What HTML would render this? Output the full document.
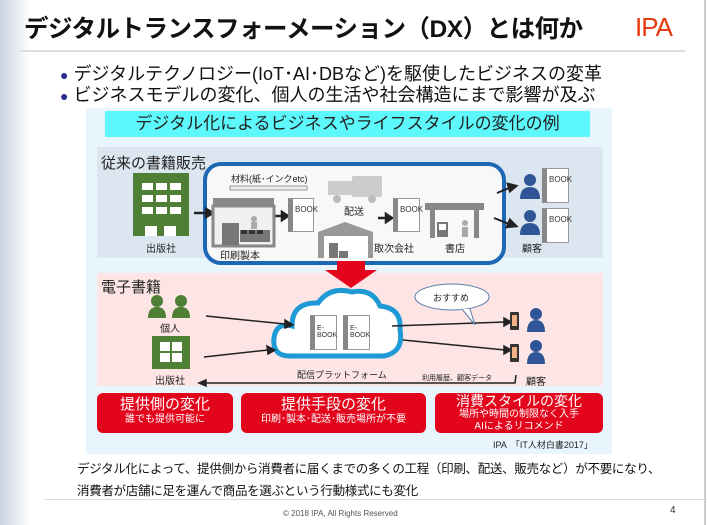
<!DOCTYPE html>
<html><head><meta charset="utf-8"><style>
*{margin:0;padding:0;box-sizing:border-box}
body{width:707px;height:525px;position:relative;overflow:hidden;background:#fff;font-family:"Liberation Sans","Noto Sans CJK JP",sans-serif;color:#111}
.a{position:absolute;white-space:nowrap}
.book{position:absolute;background:#fff;border:1px solid #999;border-left:5px solid #888;font-size:8px;color:#333;padding:6px 0 0 2px}
.p{position:absolute}
.lbl{position:absolute;font-size:10px;color:#222;white-space:nowrap}
.rb{position:absolute;background:#e3051b;border-radius:6px;color:#fff;text-align:center;top:393px;height:40px}
.rb b{display:block;font-size:15px;font-weight:normal;line-height:18px;margin-top:3px}
.rb span{display:block;font-size:10px;line-height:12px}
</style></head><body>
<div class="a" style="left:0;top:0;width:30px;height:525px;background:linear-gradient(90deg,#c9d3e3,#fff)"></div>
<div class="a" style="left:704px;top:0;width:2px;height:525px;background:#ccc"></div>
<div class="a" style="left:24px;top:10px;font-size:24.5px;font-weight:bold;letter-spacing:-0.5px">デジタルトランスフォーメーション（DX）とは何か</div>
<div class="a" style="left:635px;top:12px;font-size:26px;color:#e8380d;letter-spacing:-1px">IPA</div>
<div class="a" style="left:20px;top:50px;width:665px;height:2px;background:#ddd"></div>
<div class="a" style="left:60px;top:60px;font-size:18px"><span style="color:#2b2e8c;font-size:14px">●</span> デジタルテクノロジー(IoT･AI･DBなど)を駆使したビジネスの変革</div>
<div class="a" style="left:60px;top:81px;font-size:18px"><span style="color:#2b2e8c;font-size:14px">●</span> ビジネスモデルの変化、個人の生活や社会構造にまで影響が及ぶ</div>

<div class="a" style="left:86px;top:108px;width:526px;height:346px;background:#e9f5fc"></div>
<div class="a" style="left:105px;top:111px;width:485px;height:26px;background:#5cf8fc;font-size:17px;text-align:center;line-height:26px;color:#222">デジタル化によるビジネスやライフスタイルの変化の例</div>
<div class="a" style="left:97px;top:147px;width:506px;height:111px;background:#dce6f1"></div>
<div class="a" style="left:101px;top:152px;font-size:15px;color:#222">従来の書籍販売</div>
<div class="a" style="left:203px;top:162px;width:303px;height:103px;border:4px solid #1c68b5;border-radius:18px;background:#f7f8f8"></div>
<div class="p" style="left:133px;top:173px;width:56px;height:63px;background:#4f7f35"></div>
<svg class="p" style="left:133px;top:173px" width="56" height="63"><g fill="#fff"><rect x="9" y="10" width="11" height="7"/><rect x="23" y="10" width="11" height="7"/><rect x="37" y="10" width="11" height="7"/><rect x="9" y="22" width="11" height="7"/><rect x="23" y="22" width="11" height="7"/><rect x="37" y="22" width="11" height="7"/><rect x="9" y="34" width="11" height="7"/><rect x="23" y="34" width="11" height="7"/><rect x="37" y="34" width="11" height="7"/><rect x="12" y="53" width="12" height="10"/><rect x="31" y="53" width="12" height="10"/></g></svg>
<div class="lbl" style="left:146px;top:240px">出版社</div>
<svg class="p" style="left:0;top:0" width="707" height="525">
<g stroke="#222" stroke-width="2.5" fill="#222">
<line x1="194" y1="213" x2="206" y2="213"/><polygon points="206,209 213,213 206,217"/>
<line x1="274" y1="216" x2="282" y2="216"/><polygon points="282,212 288,216 282,220"/>
<line x1="378" y1="218" x2="386" y2="218"/><polygon points="386,214 392,218 386,222"/>
<line x1="497" y1="193" x2="509" y2="188" stroke-width="2"/><polygon points="508,184 516,186 510,191"/>
<line x1="494" y1="218" x2="509" y2="224" stroke-width="2"/><polygon points="510,220 516,226 507,227"/>
</g>
<rect x="213" y="198" width="61" height="8" fill="#888"/><rect x="213" y="206" width="61" height="40" fill="#f0f0f0" stroke="#888" stroke-width="3"/>
<rect x="222" y="223" width="17" height="22" fill="#777"/><rect x="240" y="230" width="30" height="12" fill="#777"/><rect x="241" y="230" width="6" height="4" fill="#333"/><rect x="249" y="230" width="6" height="4" fill="#333"/><rect x="257" y="230" width="6" height="4" fill="#333"/><circle cx="254" cy="219" r="3" fill="#aaa"/><rect x="251" y="222" width="6" height="7" fill="#aaa"/>
<rect x="230" y="186" width="77" height="4" fill="#eee" stroke="#999"/>
<rect x="328" y="181" width="24" height="14" fill="#ccc"/><rect x="352" y="176" width="30" height="21" rx="2" fill="#ccc"/><circle cx="337" cy="199" r="4" fill="#bbb"/><circle cx="372" cy="199" r="4" fill="#bbb"/>
<polygon points="318,232 345,222 373,232 373,258 318,258" fill="#999"/><rect x="324" y="236" width="44" height="22" fill="#fff"/><rect x="329" y="243" width="9" height="8" fill="#777"/><rect x="329" y="251" width="9" height="7" fill="#777"/><rect x="339" y="251" width="9" height="7" fill="#777"/>
<rect x="425" y="203" width="59" height="7" fill="#888"/><rect x="430" y="210" width="5" height="28" fill="#888"/><rect x="474" y="210" width="5" height="28" fill="#888"/><rect x="437" y="222" width="11" height="15" fill="#777"/><rect x="439" y="224" width="7" height="6" fill="#fff"/><circle cx="465" cy="223" r="3" fill="#aaa"/><rect x="462" y="227" width="6" height="10" fill="#aaa"/>
<g fill="#2f5597"><circle cx="530" cy="180" r="6"/><path d="M520 199 Q520 187 530 187 Q540 187 540 199Z"/><circle cx="530" cy="216" r="6"/><path d="M520 235 Q520 223 530 223 Q540 223 540 235Z"/></g>
<rect x="337" y="261" width="28" height="10" fill="#e3051b"/>
</svg>
<div class="lbl" style="left:231px;top:172px;font-size:9px">材料(紙･インクetc)</div>
<div class="book" style="left:288px;top:198px;width:26px;height:34px">BOOK</div>
<div class="lbl" style="left:344px;top:203px;font-size:10px">配送</div>
<div class="book" style="left:393px;top:198px;width:27px;height:34px">BOOK</div>
<div class="lbl" style="left:220px;top:247px">印刷製本</div>
<div class="lbl" style="left:374px;top:240px">取次会社</div>
<div class="lbl" style="left:445px;top:240px">書店</div>
<div class="book" style="left:542px;top:168px;width:27px;height:35px">BOOK</div>
<div class="book" style="left:542px;top:208px;width:27px;height:35px">BOOK</div>
<div class="lbl" style="left:522px;top:240px">顧客</div>

<div class="a" style="left:97px;top:273px;width:506px;height:113px;background:#fde5e5"></div>
<div class="a" style="left:101px;top:276px;font-size:15px;color:#222">電子書籍</div>
<svg class="p" style="left:0;top:0" width="707" height="525">
<polygon points="325,270 377,270 351,288" fill="#e3051b"/><rect x="337" y="262" width="28" height="9" fill="#e3051b"/>
<g fill="#4f7f35"><circle cx="157" cy="301" r="6"/><path d="M148 318 Q148 307 157 307 Q166 307 166 318Z"/><circle cx="181" cy="301" r="6"/><path d="M172 318 Q172 307 181 307 Q190 307 190 318Z"/><rect x="152" y="336" width="38" height="33"/></g>
<g fill="#fff"><rect x="160" y="342" width="10" height="9"/><rect x="172" y="342" width="10" height="9"/><rect x="160" y="353" width="10" height="9"/><rect x="172" y="353" width="10" height="9"/></g>
<path d="M290 356 Q272 356 274 338 Q276 322 292 326 Q292 302 318 303 Q330 286 352 292 Q372 288 380 306 Q402 308 400 330 Q404 352 384 356Z" fill="#fff" stroke="#1e9ad6" stroke-width="5"/>
<g stroke="#222" stroke-width="1.5" fill="#222"><line x1="206" y1="316" x2="285" y2="324"/><polygon points="285,320 293,325 285,328"/><line x1="204" y1="357" x2="268" y2="350"/><polygon points="267,346 275,350 268,354"/><line x1="392" y1="326" x2="505" y2="322"/><polygon points="504,318 511,322 504,326"/><line x1="403" y1="340" x2="505" y2="350"/><polygon points="504,346 511,350 504,354"/>
<polyline points="516,375 515,383 206,383" fill="none"/><polygon points="206,380 199,383 206,386"/></g>
<ellipse cx="452" cy="297" rx="37" ry="13" fill="#fff" stroke="#5a7ea8"/>
<path d="M462 309 L475 325 L470 309" fill="#fff" stroke="#5a7ea8"/>
<g fill="#333"><rect x="510" y="312" width="9" height="18" rx="1"/><rect x="510" y="344" width="9" height="18" rx="1"/></g><g fill="#f4b183"><rect x="512" y="315" width="5" height="11"/><rect x="512" y="347" width="5" height="11"/></g>
<g fill="#2f5597"><circle cx="536" cy="314" r="6"/><path d="M527 332 Q527 320 536 320 Q545 320 545 332Z"/><circle cx="536" cy="346" r="6"/><path d="M527 364 Q527 352 536 352 Q545 352 545 364Z"/></g>
</svg>
<div class="lbl" style="left:160px;top:320px">個人</div>
<div class="lbl" style="left:155px;top:372px">出版社</div>
<div class="book" style="left:310px;top:315px;width:27px;height:35px;font-size:7px;padding-top:9px">E-<br>BOOK</div>
<div class="book" style="left:343px;top:315px;width:27px;height:35px;font-size:7px;padding-top:9px">E-<br>BOOK</div>
<div class="lbl" style="left:297px;top:368px;font-size:9px">配信プラットフォーム</div>
<div class="lbl" style="left:433px;top:291px;font-size:9px">おすすめ</div>
<div class="lbl" style="left:422px;top:373px;font-size:7px">利用履歴、顧客データ</div>
<div class="lbl" style="left:526px;top:373px">顧客</div>

<div class="rb" style="left:97px;width:136px"><b>提供側の変化</b><span>誰でも提供可能に</span></div>
<div class="rb" style="left:241px;width:185px"><b>提供手段の変化</b><span>印刷･製本･配送･販売場所が不要</span></div>
<div class="rb" style="left:435px;width:168px"><b style="font-size:14px;line-height:15px;margin-top:1px">消費スタイルの変化</b><span>場所や時間の制限なく入手</span><span>AIによるリコメンド</span></div>
<div class="lbl" style="left:493px;top:438px;font-size:9px">IPA　「IT人材白書2017」</div>

<div class="a" style="left:77px;top:458px;font-size:12.5px;letter-spacing:-0.3px">デジタル化によって、提供側から消費者に届くまでの多くの工程（印刷、配送、販売など）が不要になり、</div>
<div class="a" style="left:77px;top:480px;font-size:12.5px;letter-spacing:-0.3px">消費者が店舗に足を運んで商品を選ぶという行動様式にも変化</div>
<div class="a" style="left:45px;top:499px;width:662px;height:1px;background:#ddd"></div>
<div class="a" style="left:283px;top:509px;font-size:8px;color:#555">© 2018 IPA, All Rights Reserved</div>
<div class="a" style="left:670px;top:505px;font-size:10px;color:#333">4</div>
</body></html>
